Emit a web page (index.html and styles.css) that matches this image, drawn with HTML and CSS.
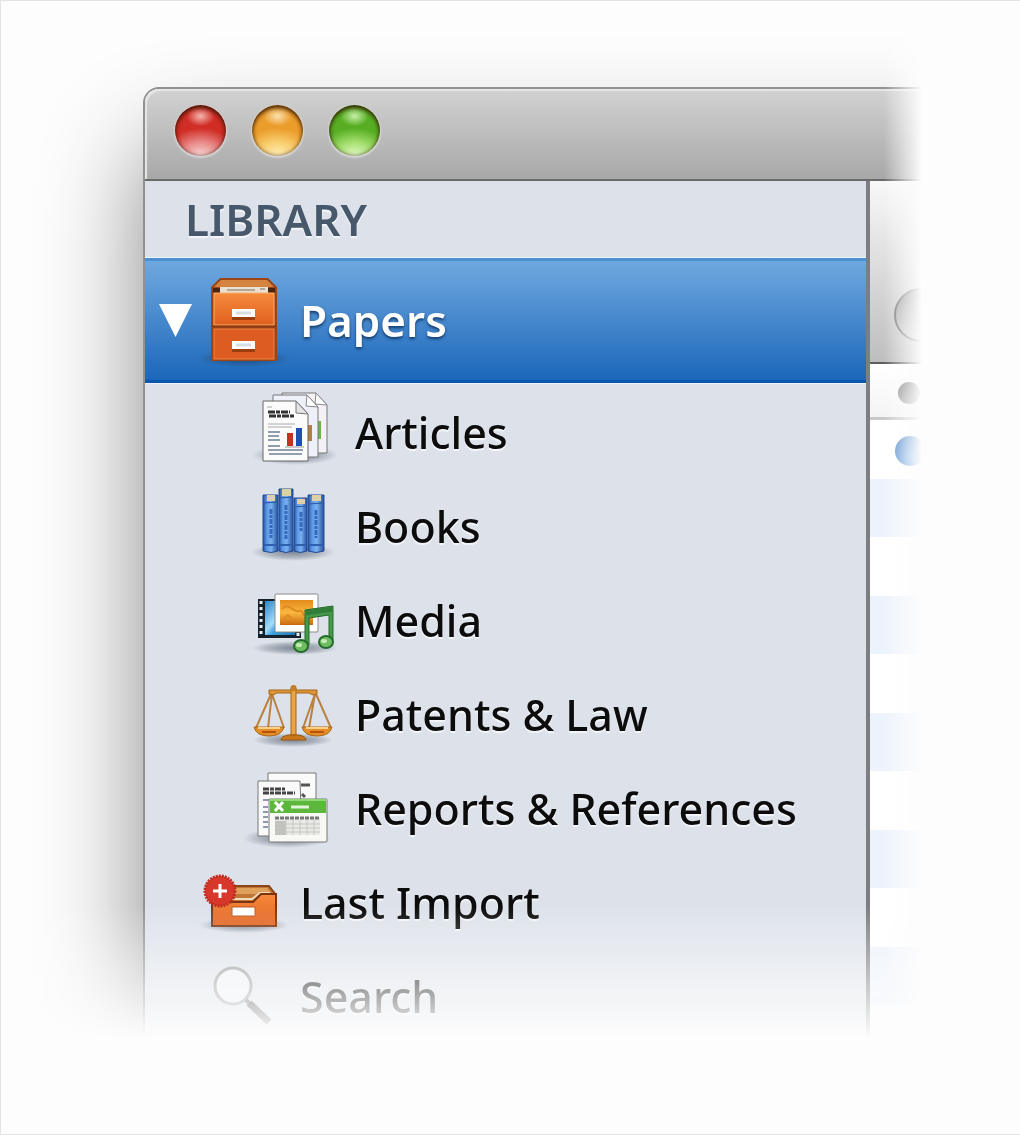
FILE: index.html
```
<!DOCTYPE html>
<html lang="en">
<head>
    <meta charset="UTF-8">
    <meta name="viewport" content="width=device-width, initial-scale=1.0">
    <title>Papers Library</title>
    <link rel="stylesheet" href="styles.css">
</head>
<body>
    <main class="preview">
        <div class="window">
            <header class="titlebar">
                <button class="light red" aria-label="Close"></button>
                <button class="light yellow" aria-label="Minimize"></button>
                <button class="light green" aria-label="Zoom"></button>
            </header>
            <div class="panes">
                <nav class="sidebar">
                    <h2>LIBRARY</h2>
                    <div class="row selected">
                        <button class="toggle" aria-label="Collapse Papers"></button>
                        <a href="#papers">
                            <svg class="icon tall" viewBox="0 0 90 90" aria-hidden="true">
                                <defs>
                                    <radialGradient id="shade">
                                        <stop offset="0" stop-color="#1c2a3c" stop-opacity=".5"/>
                                        <stop offset=".6" stop-color="#1c2a3c" stop-opacity=".25"/>
                                        <stop offset="1" stop-color="#1c2a3c" stop-opacity="0"/>
                                    </radialGradient>
                                    <linearGradient id="orange" x2="0" y2="1">
                                        <stop offset="0" stop-color="#f68a3c"/>
                                        <stop offset="1" stop-color="#e0601f"/>
                                    </linearGradient>
                                </defs>
                                <ellipse cx="44" cy="82" rx="46" ry="9" fill="url(#shade)"/>
                                <path d="M20 2h48l9 9v74H11V11z" fill="#9c4416"/>
                                <path d="M21 4h46l7 7H14z" fill="#d58440"/>
                                <path d="M13 12h62v5H13z" fill="#4a2410"/>
                                <path d="M20 11h48v6H20z" fill="#e8e0d2"/>
                                <path d="M27 14h28M60 13h5" stroke="#b3a896" stroke-width="2"/>
                                <rect x="14" y="17" width="60" height="32" fill="url(#orange)" stroke="#ffb06c" stroke-width="1"/>
                                <rect x="14" y="53" width="60" height="30" fill="#dc5c22" stroke="#f08243" stroke-width="1"/>
                                <path d="M12 50.5h64" stroke="#8e3a12" stroke-width="2"/>
                                <path d="M32 41h23v3H32zM32 73h23v3H32z" fill="#9a3e10"/>
                                <path d="M32 33h23v8H32zM32 65h23v8H32z" fill="#fff"/>
                                <path d="M36 37h15M36 69h15" stroke="#d8dde2" stroke-width="3"/>
                            </svg>
                            <span>Papers</span>
                        </a>
                    </div>
                    <ul>
                        <li class="row child">
                            <a href="#articles">
                                <svg class="icon" viewBox="0 0 90 80" aria-hidden="true">
                                    <ellipse cx="40" cy="62" rx="43" ry="10" fill="url(#shade)"/>
                                    <path d="M27 0h34l11 12v48H27z" fill="#f4f2f6" stroke="#777"/>
                                    <path d="M61 0l-1 11 12 1z" fill="#fff" stroke="#888"/>
                                    <path d="M64 28v18" stroke="#6bb544" stroke-width="4"/>
                                    <path d="M18 2h34l11 12v50H18z" fill="#eef0fa" stroke="#777"/>
                                    <path d="M52 2l-1 11 12 1z" fill="#fff" stroke="#888"/>
                                    <path d="M55 32v16" stroke="#b5803e" stroke-width="4"/>
                                    <path d="M8 8h33l12 13v47H8z" fill="#fbfbfb" stroke="#666"/>
                                    <path d="M41 8v12l12 1z" fill="#e4e4e4" stroke="#777"/>
                                    <path d="M13 19h22M14 23h25" stroke="#333" stroke-width="3" stroke-dasharray="7 1 4 1"/>
                                    <path d="M12 14h5M13 31h27M13 34h24" stroke="#aaa" stroke-width="1"/>
                                    <path d="M13 39h12M13 43h11M13 47h12M13 53h12M13 57h35M14 61h33" stroke="#929dad" stroke-width="2"/>
                                    <path d="M30 54h19" stroke="#999"/>
                                    <path d="M32 40h6v13h-6z" fill="#c5331f"/>
                                    <path d="M41 35h6v18h-6z" fill="#1d50b0"/>
                                </svg>
                                <span>Articles</span>
                            </a>
                        </li>
                        <li class="row child">
                            <a href="#books">
                                <svg class="icon" viewBox="0 0 90 80" aria-hidden="true">
                                    <defs>
                                        <linearGradient id="spine">
                                            <stop offset="0" stop-color="#2450a0"/>
                                            <stop offset=".25" stop-color="#5c98e4"/>
                                            <stop offset=".55" stop-color="#79b0f0"/>
                                            <stop offset="1" stop-color="#2450a0"/>
                                        </linearGradient>
                                    </defs>
                                    <ellipse cx="38" cy="65" rx="42" ry="9" fill="url(#shade)"/>
                                    <g fill="url(#spine)" stroke="#244c94">
                                        <path d="M8 8h15v56q-7 3-15 0z"/>
                                        <path d="M24 2h14v62q-7 3-14 0z"/>
                                        <path d="M39 11h13v53q-7 3-13 0z"/>
                                        <path d="M53 8h16v56q-8 3-16 0z"/>
                                    </g>
                                    <path d="M12 8h8v6h-8zM27 2h9v7h-9zM42 12h8v5h-8zM57 8h9v6h-9z" fill="#dfcfa8"/>
                                    <path d="M8 16l15-1M24 11l14-1M39 20l13-1M53 17l16-1" stroke="#2a56a4"/>
                                    <path d="M16 22v30M31 18v34M46 25v20M61 23v28" stroke="#356bbb" stroke-width="3" stroke-dasharray="5 1 3 1"/>
                                    <path d="M9 58h13M25 58h12M40 58h11M54 58h14" stroke="#2f60b0" stroke-width="2"/>
                                </svg>
                                <span>Books</span>
                            </a>
                        </li>
                        <li class="row child">
                            <a href="#media">
                                <svg class="icon" viewBox="0 0 90 80" aria-hidden="true">
                                    <defs>
                                        <linearGradient id="sky" x2="1" y2="1">
                                            <stop offset="0" stop-color="#2a86c8"/>
                                            <stop offset=".45" stop-color="#a5ddf8"/>
                                            <stop offset=".6" stop-color="#3a9fe0"/>
                                            <stop offset="1" stop-color="#1c77bd"/>
                                        </linearGradient>
                                        <linearGradient id="sunset" x2="0" y2="1">
                                            <stop offset="0" stop-color="#e38a1b"/>
                                            <stop offset=".5" stop-color="#f9b841"/>
                                            <stop offset="1" stop-color="#c96a10"/>
                                        </linearGradient>
                                    </defs>
                                    <ellipse cx="40" cy="67" rx="43" ry="7" fill="url(#shade)"/>
                                    <rect x="3" y="18" width="43" height="39" fill="#14212b"/>
                                    <rect x="10" y="20" width="30" height="34" fill="url(#sky)"/>
                                    <path d="M6 20v36M43 52v5" stroke="#e4eef4" stroke-width="3" stroke-dasharray="3 3"/>
                                    <rect x="20" y="13" width="43" height="38" rx="1" fill="#fff" stroke="#8a8a8a"/>
                                    <rect x="25" y="19" width="33" height="25" fill="url(#sunset)"/>
                                    <path d="M27 28q4-5 9-1t8 3 5 5M28 38l5-4 4 4" fill="none" stroke="#e08a20" stroke-width="2"/>
                                    <path d="M50 64V29l28-4v36h-4V34l-20 3v27z" fill="#46994a" stroke="#246b2b"/>
                                    <path d="M51 32l26-4" stroke="#327e38" stroke-width="5"/>
                                    <ellipse cx="46" cy="65" rx="7" ry="6" fill="#6fbd62" stroke="#246b2b" stroke-width="2"/>
                                    <ellipse cx="71" cy="61" rx="7" ry="6" fill="#6fbd62" stroke="#246b2b" stroke-width="2"/>
                                    <ellipse cx="44" cy="64" rx="3" ry="2" fill="#c3ecb2"/>
                                    <ellipse cx="69" cy="60" rx="3" ry="2" fill="#c3ecb2"/>
                                </svg>
                                <span>Media</span>
                            </a>
                        </li>
                        <li class="row child">
                            <a href="#patents">
                                <svg class="icon" viewBox="0 0 90 80" aria-hidden="true">
                                    <ellipse cx="38" cy="65" rx="40" ry="7" fill="url(#shade)"/>
                                    <g fill="none" stroke="#b98242" stroke-width="2">
                                        <path d="M16 19L1 53M17 19l-4 34M17 19l12 34"/>
                                        <path d="M60 19L48 53M60 19l-6 34M61 19l15 34"/>
                                    </g>
                                    <path d="M-1 52h30q-2 9-15 9T-1 52zM47 52h30q-2 9-15 9t-15-9z" fill="#e08e25" stroke="#a8641a"/>
                                    <path d="M3 53h22M51 53h22" stroke="#ffd08a" stroke-width="2"/>
                                    <path d="M7 57h14M55 57h14" stroke="#b8500e" stroke-width="2"/>
                                    <path d="M14 15h48v4l-4 1-4-2H22l-4 2-4-1z" fill="#dd9635" stroke="#a8641a"/>
                                    <path d="M36 13h5v47h-5z" fill="#e9a444" stroke="#a8641a"/>
                                    <circle cx="38.500" cy="13" r="3" fill="#c67b25"/>
                                    <path d="M26 65q0-4 8-5h9q8 1 8 5z" fill="#c9761c" stroke="#97560f"/>
                                </svg>
                                <span>Patents &amp; Law</span>
                            </a>
                        </li>
                        <li class="row child">
                            <a href="#reports">
                                <svg class="icon" viewBox="0 0 90 80" aria-hidden="true">
                                    <ellipse cx="32" cy="69" rx="44" ry="10" fill="url(#shade)"/>
                                    <path d="M13 4h48v56H13z" fill="#fafafa" stroke="#777"/>
                                    <path d="M46 16h9M47 25l3 3" stroke="#555" stroke-width="3"/>
                                    <path d="M3 12h42l2 55H3z" fill="#fafafa" stroke="#777"/>
                                    <path d="M8 20h22M8 24h32" stroke="#444" stroke-width="3" stroke-dasharray="6 1 4 1"/>
                                    <path d="M8 31h7M8 38h5M8 43h5M8 48h5M8 53h5M8 58h5" stroke="#8e99ab" stroke-width="2"/>
                                    <rect x="14" y="30" width="58" height="43" rx="1" fill="#f8f8f4" stroke="#777"/>
                                    <path d="M15 30h56v14H15z" fill="#5cb83c"/>
                                    <path d="M15 31h56" stroke="#8fd873" stroke-width="2"/>
                                    <path d="M20 33l8 9M28 33l-8 9" stroke="#fff" stroke-width="3"/>
                                    <path d="M36 38h18" stroke="#e0f6d4" stroke-width="3"/>
                                    <path d="M20 49h45v17H20z" fill="#e9e9e5"/>
                                    <path d="M20 52h11v14H20z" fill="#c0c0bd"/>
                                    <path d="M20 49h45" stroke="#777" stroke-width="3" stroke-dasharray="4 1"/>
                                    <path d="M20 55h45M20 59h45M20 63h45M31 51v15M38 51v15M45 51v15M52 51v15M59 51v15" stroke="#c6c6c2"/>
                                </svg>
                                <span>Reports &amp; References</span>
                            </a>
                        </li>
                        <li class="row">
                            <a href="#last-import">
                                <svg class="icon" viewBox="0 0 90 80" aria-hidden="true">
                                    <ellipse cx="44" cy="62" rx="45" ry="8" fill="url(#shade)"/>
                                    <path d="M18 23h51l7 9v31H12V32z" fill="#c27636" stroke="#8a4519" stroke-width="2"/>
                                    <path d="M20 25h47l5 6H16z" fill="#dfa05c"/>
                                    <path d="M30 36h22l8-6h10" fill="none" stroke="#f1dcbc" stroke-width="2"/>
                                    <path d="M12 39h41l8-8h15v32H12z" fill="url(#orange)" stroke="#7c3510" stroke-width="2"/>
                                    <path d="M32 44h23v9H32z" fill="#fff" stroke="#bb5b24"/>
                                    <circle cx="20" cy="28" r="15" fill="#d8382b" stroke="#c12c22" stroke-width="3" stroke-dasharray="2 1"/>
                                    <path d="M20 21v14M13 28h14" stroke="#fff" stroke-width="3"/>
                                </svg>
                                <span>Last Import</span>
                            </a>
                        </li>
                        <li class="row">
                            <a href="#search">
                                <svg class="icon" viewBox="0 0 90 80" aria-hidden="true">
                                    <circle cx="33" cy="29" r="18" fill="#fff" fill-opacity=".5" stroke="#999" stroke-width="3"/>
                                    <path d="M46 43l4 4" stroke="#666" stroke-width="4"/>
                                    <path d="M49 46l20 19" stroke="#444" stroke-width="7"/>
                                </svg>
                                <span>Search</span>
                            </a>
                        </li>
                    </ul>
                </nav>
                <section class="content">
                    <div class="toolbar"><button class="round" aria-label="Toolbar action"></button></div>
                    <div class="columns"><span class="dot"></span></div>
                    <div class="list"><span class="dot unread"></span></div>
                </section>
            </div>
        </div>
    </main>
</body>
</html>
```

FILE: styles.css
```
* {
    box-sizing: border-box;
}
body {
    margin: 0;
    min-height: 100vh;
    background-color: #fdfdfd;
    border: 1px solid #e4e4e4;
    border-right: none;
    font-family: "Noto Sans", "Open Sans", sans-serif;
    font-size: 43px;
    font-weight: 500;
    color: #0c0c0c;
}
/* the window dissolves to the right and to the bottom */
.preview {
    margin-right: 98px;
    padding: 86px 0 0 142px;
    overflow: hidden;
    mask-image: linear-gradient(to right, #000 calc(100% - 38px), transparent),
        linear-gradient(to bottom, #000 calc(100% - 140px), rgba(0, 0, 0, .35) calc(100% - 52px), transparent calc(100% - 8px));
    mask-composite: intersect;
}
.window {
    margin-right: -120px;
    border: 2px solid #919191;
    border-radius: 16px 0 0 0;
    box-shadow: 0 60px 100px rgba(0, 0, 0, .46);
    background-color: #fff;
}
.titlebar {
    display: flex;
    align-items: center;
    gap: 26px;
    height: 92px;
    padding: 0 30px 8px;
    background: linear-gradient(#d2d2d2, #a8a8a8);
    border-bottom: 2px solid #6a6a6a;
    border-radius: 14px 0 0 0;
    box-shadow: inset 2px 2px 1px #e6e6e6;
}
.light {
    width: 51px;
    height: 51px;
    padding: 0;
    border: none;
    border-radius: 50%;
    box-shadow: 0 1px 2px 1px #d6d6d6, inset 0 3px 4px rgba(50, 20, 0, .75), inset 0 0 4px rgba(50, 20, 0, .6);
}
.red {
    background: radial-gradient(14px 10px at 50% 22%, #f5b5ae, transparent), radial-gradient(36px 28px at 50% 100%, #fbdcdc, #e88a88 50%, #d02d25);
}
.yellow {
    background: radial-gradient(14px 10px at 50% 22%, #fbe0b0, transparent), radial-gradient(36px 28px at 50% 100%, #fff0bc, #f9cf70 50%, #eb9d2b);
}
.green {
    background: radial-gradient(14px 10px at 50% 22%, #c8efa8, transparent), radial-gradient(36px 28px at 50% 100%, #e4fbc8, #a5df70 50%, #57ae23);
}
.panes {
    display: flex;
}
.sidebar {
    flex: 1;
    background-color: #dde2ea;
    border-right: 4px solid #7c7e80;
}
.sidebar h2 {
    margin: 0;
    height: 77px;
    padding-left: 40px;
    border-bottom: 1px solid #f2f5f9;
    font-size: 44px;
    font-weight: 600;
    line-height: 77px;
    color: #46586a;
    text-shadow: 0 2px 1px #f4f7fa;
}
.sidebar ul {
    list-style: none;
    margin: 0;
    padding: 2px 0 0;
    border-top: 1px solid #eef2f6;
}
.row {
    display: flex;
    align-items: center;
    height: 94px;
    padding-left: 55px;
}
.row.child {
    padding-left: 110px;
}
.row a {
    display: flex;
    align-items: center;
    gap: 10px;
    color: inherit;
    text-decoration: none;
    white-space: nowrap;
    text-shadow: 0 2px 1px #f4f7fa;
}
.row span {
    padding-bottom: 2px;
}
.icon {
    width: 90px;
    height: 80px;
    overflow: visible;
}
.icon.tall {
    height: 90px;
}
.row.selected {
    height: 125px;
    padding-left: 14px;
    gap: 8px;
    background: linear-gradient(#6fa8e0, #1c67b9);
    border-top: 3px solid #4b8fd0;
    border-bottom: 3px solid #0857ae;
}
.row.selected a {
    color: #fff;
    font-size: 44px;
    font-weight: 600;
    text-shadow: 0 2px 3px #143c6c;
}
.toggle {
    width: 33px;
    height: 33px;
    padding: 0;
    border: none;
    background-color: #fff;
    clip-path: polygon(0 0, 100% 0, 50% 100%);
}
.content {
    display: flex;
    flex-direction: column;
    width: 170px;
}
.toolbar {
    height: 183px;
    padding: 107px 0 0 24px;
    background: linear-gradient(#f8f8f8, #bebebe);
    border-bottom: 2px solid #5e5e5e;
}
.round {
    display: block;
    width: 54px;
    height: 54px;
    border: 2px solid #777;
    border-radius: 50%;
    background: linear-gradient(#969696, #cfcfcf);
}
.columns {
    height: 56px;
    padding: 18px 0 0 28px;
    background: linear-gradient(#fff, #f4f4f4);
    border-bottom: 3px solid #c9c9c9;
}
.dot {
    display: block;
    width: 22px;
    height: 22px;
    border-radius: 50%;
    background: linear-gradient(#727272, #a6a6a6);
}
/* striped table rows */
.list {
    flex: 1;
    padding: 16px 0 0 25px;
    background: repeating-linear-gradient(#fff 0, #fff 59px, #edf3fc 59px, #edf3fc 117px);
}
.unread {
    width: 30px;
    height: 30px;
    background: radial-gradient(circle at 60% 70%, #86b6ea, #3f78be);
}
```
